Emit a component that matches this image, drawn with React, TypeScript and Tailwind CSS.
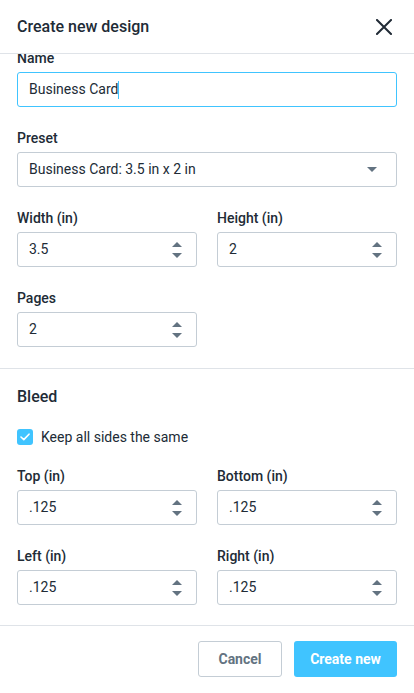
import React, { useLayoutEffect, useRef } from "react";

const font = { fontFamily: "Roboto, 'Noto Sans', Arial, sans-serif" };

function Up() {
  return (
    <svg width="10" height="5" viewBox="0 0 10 5" className="block">
      <polygon points="5,0 10,5 0,5" fill="#637381" />
    </svg>
  );
}
function Down() {
  return (
    <svg width="10" height="5" viewBox="0 0 10 5" className="block">
      <polygon points="0,0 10,0 5,5" fill="#637381" />
    </svg>
  );
}

function Label({ children }: { children: React.ReactNode }) {
  return <div className="h-5 text-[14px] leading-5 font-medium text-[#212b36]">{children}</div>;
}

function NumberField({ label, value }: { label: string; value: string }) {
  return (
    <div className="flex flex-col">
      <Label>{label}</Label>
      <div className="mt-1 h-[35px] rounded-[3px] border border-[#c4cdd5] flex items-center pl-[11px] pr-[14px]">
        <span className="flex-1 text-[14px] text-[#212b36]">{value}</span>
        <div className="flex flex-col items-center gap-[6px] pt-[1px]">
          <Up />
          <Down />
        </div>
      </div>
    </div>
  );
}

export default function App() {
  const bodyRef = useRef<HTMLDivElement>(null);
  useLayoutEffect(() => {
    if (bodyRef.current) bodyRef.current.scrollTop = bodyRef.current.scrollHeight;
  }, []);

  return (
    <div className="h-[693px] w-[414px] bg-white flex flex-col" style={font}>
      <div className="h-[54px] shrink-0 border-b border-[#dfe3e8] flex items-center justify-between pl-[17px] pr-[22px]">
        <div className="text-[16px] font-medium text-[#212b36] leading-6">Create new design</div>
        <svg width="16" height="16" viewBox="0 0 16 16" className="block">
          <path d="M1 1 L15 15 M15 1 L1 15" stroke="#212b36" strokeWidth="2" strokeLinecap="square" />
        </svg>
      </div>

      <div ref={bodyRef} className="flex-1 min-h-0 overflow-hidden">
        <div className="px-[17px] pt-4 pb-[21px] border-b border-[#dfe3e8] flex flex-col gap-[21px]">
          <div className="flex flex-col">
            <Label>Name</Label>
            <div className="mt-1 h-[35px] rounded-[3px] border border-[#40c4ff] flex items-center pl-[11px]">
              <span className="text-[14px] text-[#212b36]">Business Card</span>
              <span className="inline-block w-px h-[18px] bg-[#40c4ff]" />
            </div>
          </div>
          <div className="flex flex-col">
            <Label>Preset</Label>
            <div className="mt-1 h-[35px] rounded-[3px] border border-[#c4cdd5] flex items-center pl-[11px] pr-[19px]">
              <span className="flex-1 text-[14px] text-[#212b36]">Business Card: 3.5 in x 2 in</span>
              <Down />
            </div>
          </div>
          <div className="grid grid-cols-2 gap-x-5">
            <NumberField label="Width (in)" value="3.5" />
            <NumberField label="Height (in)" value="2" />
          </div>
          <div className="grid grid-cols-2 gap-x-5">
            <NumberField label="Pages" value="2" />
          </div>
        </div>

        <div className="px-[17px] pt-4 pb-5">
          <div className="text-[16px] leading-6 font-medium text-[#212b36]">Bleed</div>
          <div className="mt-[18px] h-5 flex items-center gap-2">
            <div className="w-4 h-4 rounded-[3px] bg-[#40c4ff] flex items-center justify-center">
              <svg width="10" height="8" viewBox="0 0 10 8">
                <path d="M1 4 L3.8 6.6 L9 1.2" stroke="white" strokeWidth="1.6" fill="none" strokeLinecap="round" strokeLinejoin="round" />
              </svg>
            </div>
            <span className="text-[14px] text-[#212b36]">Keep all sides the same</span>
          </div>
          <div className="mt-[19px] grid grid-cols-2 gap-x-5 gap-y-[21px]">
            <NumberField label="Top (in)" value=".125" />
            <NumberField label="Bottom (in)" value=".125" />
            <NumberField label="Left (in)" value=".125" />
            <NumberField label="Right (in)" value=".125" />
          </div>
        </div>
      </div>

      <div className="h-[68px] shrink-0 border-t border-[#dfe3e8] pt-[15px] px-[17px] flex justify-end items-start gap-3">
        <button className="w-[84px] h-[36px] rounded-[3px] border border-[#c4cdd5] bg-white text-[14px] font-bold text-[#637381]">
          Cancel
        </button>
        <button className="w-[103px] h-[36px] rounded-[3px] bg-[#40c4ff] text-[14px] font-bold text-white">
          Create new
        </button>
      </div>
    </div>
  );
}
